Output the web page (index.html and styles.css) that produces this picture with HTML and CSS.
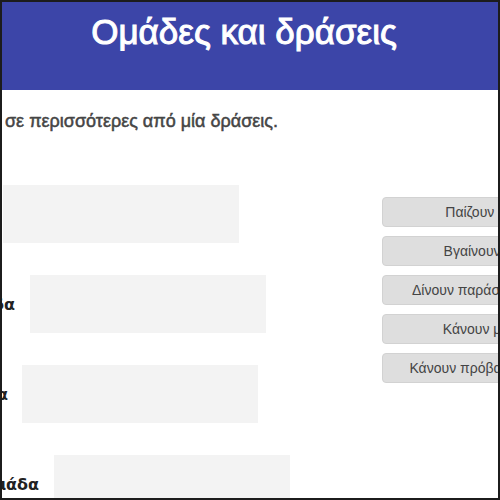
FILE: index.html
```html
<!DOCTYPE html>
<html lang="el">
<head>
<meta charset="utf-8">
<title>Ομάδες και δράσεις</title>
<link rel="stylesheet" href="styles.css">
</head>
<body>
<div class="frame">
  <header class="header">
    <h1 class="title">Ομάδες και δράσεις</h1>
  </header>
  <p class="intro">σε περισσότερες από μία δράσεις.</p>
  <div class="main">
    <div class="groups">
      <div class="row row-a"><span class="label">1η ομάδα</span><div class="dropzone"></div></div>
      <div class="row row-b"><span class="label">2η ομάδα</span><div class="dropzone"></div></div>
      <div class="row row-c"><span class="label">3η ομάδα</span><div class="dropzone"></div></div>
      <div class="row row-d"><span class="label">4η ομάδα</span><div class="dropzone"></div></div>
    </div>
    <div class="actions">
      <div class="action">Παίζουν μπάλα</div>
      <div class="action">Βγαίνουν βόλτα</div>
      <div class="action">Δίνουν παράσταση χορού</div>
      <div class="action">Κάνουν μάθημα</div>
      <div class="action">Κάνουν πρόβα στο θέατρο</div>
    </div>
  </div>
</div>
</body>
</html>
```

FILE: styles.css
```css
html, body {
  margin: 0;
  padding: 0;
  background: #ffffff;
}

.frame {
  width: 500px;
  height: 500px;
  box-sizing: border-box;
  border: 2px solid #1c1c1c;
  overflow: hidden;
  background: #ffffff;
  font-family: "DejaVu Sans", "Liberation Sans", sans-serif;
}

.header {
  height: 88px;
  background: #3c45a8;
  display: flex;
  justify-content: center;
  padding-right: 12px;
}

.title {
  margin: 0;
  padding-top: 8px;
  color: #ffffff;
  font-family: "Liberation Sans", Arial, sans-serif;
  font-size: 35px;
  font-weight: normal;
  -webkit-text-stroke: 1px #ffffff;
  line-height: 44px;
  white-space: nowrap;
}

.intro {
  margin: 20px 0 0 3px;
  font-family: "Liberation Sans", Arial, sans-serif;
  font-size: 18px;
  line-height: 22px;
  color: #454545;
  -webkit-text-stroke: 0.5px #454545;
  white-space: nowrap;
}

.main {
  display: flex;
  margin-top: 53px;
}

.groups {
  flex: none;
  width: 380px;
}

.row {
  display: flex;
  align-items: center;
  height: 58px;
  margin-bottom: 32px;
}

.label {
  flex: none;
  display: flex;
  justify-content: flex-end;
  overflow: hidden;
  white-space: nowrap;
  margin-right: 15px;
  font-size: 16px;
  font-weight: bold;
  color: #222222;
}

.row-a .label { width: 0; margin-right: 1px; }
.row-b .label { width: 13px; }
.row-c .label { width: 6px; margin-right: 14px; }
.row-d .label { width: 37px; }

.dropzone {
  width: 236px;
  height: 58px;
  background: #f3f3f3;
}

.actions {
  flex: none;
  display: flex;
  flex-direction: column;
  gap: 9px;
  margin-top: 12px;
}

.action {
  width: 220px;
  height: 30px;
  box-sizing: border-box;
  border: 1px solid #d2d2d2;
  border-radius: 4px;
  background: #dedede;
  color: #444444;
  font-family: "Liberation Sans", Arial, sans-serif;
  font-size: 14px;
  line-height: 28px;
  text-align: center;
  white-space: nowrap;
}
```
